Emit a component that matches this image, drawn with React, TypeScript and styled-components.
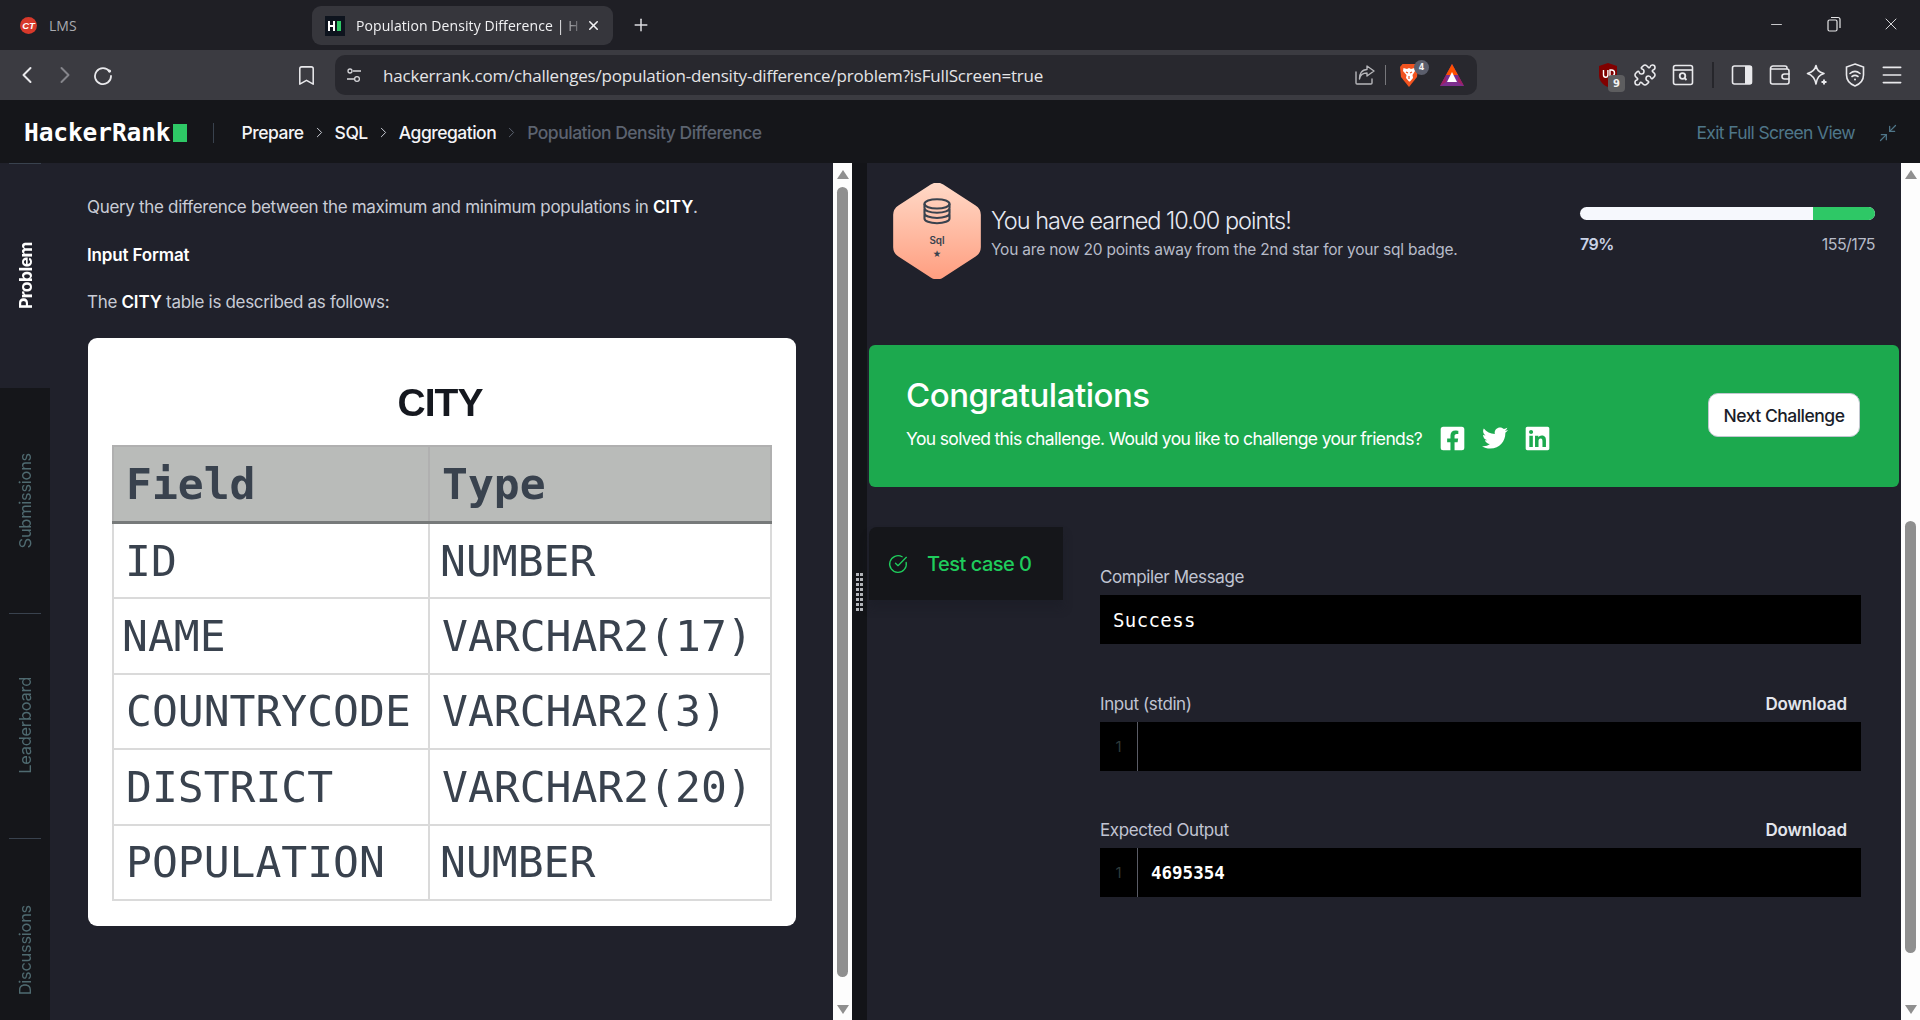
import React from "react"
import styled, { createGlobalStyle } from "styled-components"
import { Bookmark, ChevronLeft, ChevronRight, CircleCheckBig, Menu, Minimize2, Minus, Plus, Puzzle, X } from "lucide-react"
import { FaFacebookSquare, FaLinkedin, FaTwitter } from "react-icons/fa"

const GlobalStyle = createGlobalStyle`
  html, body {
    margin: 0;
    padding: 0;
    background: #20212b;
    overflow: hidden;
  }
  * {
    box-sizing: border-box;
  }
`

const Page = styled.div`
  width: 1920px;
  height: 1020px;
  display: flex;
  flex-direction: column;
  overflow: hidden;
  font-family: Inter, "Liberation Sans", sans-serif;
`

/* browser chrome */

const TabStrip = styled.div`
  height: 50px;
  flex: none;
  display: flex;
  align-items: center;
  background: #1f1f25;
  font-family: "Open Sans", "Liberation Sans", sans-serif;
  font-size: 14px;
`

const InactiveTab = styled.div`
  width: 312px;
  display: flex;
  align-items: center;
  padding-left: 20px;
  gap: 12px;
  color: #a9aab0;
`

const ActiveTab = styled.div`
  width: 301px;
  height: 39px;
  margin-top: 1px;
  display: flex;
  align-items: center;
  padding: 0 12px 0 13px;
  border-radius: 9px;
  background: #36363c;
  color: #f1f1f3;
`

const TabTitle = styled.span`
  flex: 1;
  margin-left: 11px;
  letter-spacing: 0.08px;
  white-space: nowrap;
  -webkit-mask-image: linear-gradient(to right, #000 88%, transparent 100%);
  mask-image: linear-gradient(to right, #000 88%, transparent 100%);
`

const NewTab = styled.div`
  margin-left: 18px;
  display: flex;
  color: #dcdce0;
`

const WindowControls = styled.div`
  margin-left: auto;
  margin-top: -2px;
  display: flex;
  align-items: center;
  padding-right: 1px;
  color: #e6e6e8;
`

const WindowButton = styled.div`
  width: 57px;
  display: flex;
  justify-content: center;
`

const Toolbar = styled.div`
  height: 50px;
  flex: none;
  display: flex;
  align-items: center;
  padding: 0 9px 0 8px;
  background: #3b3b41;
  color: #e9e9ec;
`

const Slot = styled.div<{ $w?: number; $ml?: number; $dim?: boolean }>`
  position: relative;
  width: ${(p) => p.$w ?? 38}px;
  margin-left: ${(p) => p.$ml ?? 0}px;
  flex: none;
  display: flex;
  justify-content: center;
  align-items: center;
  color: ${(p) => (p.$dim ? "#85858b" : "inherit")};
`

const AddressBar = styled.div`
  width: 1142px;
  height: 40px;
  margin-left: 10px;
  flex: none;
  display: flex;
  align-items: center;
  padding: 0 6px 0 10px;
  border-radius: 10px;
  background: #28282e;
`

const Url = styled.div`
  margin-left: 20px;
  flex: 1;
  font-family: "Open Sans", "Liberation Sans", sans-serif;
  font-size: 17px;
  letter-spacing: -0.2px;
  color: #e4e4e6;
  white-space: nowrap;
`

const ThinRule = styled.div<{ $h: number; $color: string; $w?: number }>`
  width: ${(p) => p.$w ?? 1}px;
  height: ${(p) => p.$h}px;
  background: ${(p) => p.$color};
`

const CountBadge = styled.span<{ $round?: boolean }>`
  position: absolute;
  display: flex;
  align-items: center;
  justify-content: center;
  font-family: "DejaVu Sans", sans-serif;
  font-weight: 700;
  color: #f2f2f2;
  ${(p) =>
    p.$round
      ? `width: 15px; height: 15px; top: -3px; left: 20px; border-radius: 50%; background: #5b5e6c; font-size: 8px;`
      : `width: 17px; height: 17px; top: 12px; left: 19px; border-radius: 4px; background: #5d5d5f; font-size: 10px;`}
`

/* site header */

const SiteHeader = styled.header`
  height: 63px;
  flex: none;
  display: flex;
  align-items: center;
  padding: 2px 0 0 24px;
  background: #15161a;
  font-size: 17.5px;
  letter-spacing: -0.5px;
`

const Logo = styled.div`
  display: flex;
  align-items: center;
  font-family: "DejaVu Sans Mono", monospace;
  font-weight: 700;
  font-size: 24.5px;
  letter-spacing: -0.1px;
  color: #fff;
`

const LogoBlock = styled.span`
  width: 14px;
  height: 18px;
  margin-left: 2px;
  background: #2ec866;
`

const HeaderRule = styled.div`
  width: 1px;
  height: 20px;
  margin: 0 28px 0 26px;
  background: #39424e;
`

const Crumb = styled.span<{ $current?: boolean }>`
  font-weight: 500;
  color: ${(p) => (p.$current ? "#5c6370" : "#f4f4f6")};
`

const CrumbSep = styled.span<{ $dim?: boolean }>`
  display: flex;
  width: 31px;
  justify-content: center;
  color: ${(p) => (p.$dim ? "#5c6370" : "#c9ccd4")};
`

const ExitFull = styled.div`
  margin-left: auto;
  display: flex;
  align-items: center;
  gap: 23px;
  padding-right: 22px;
  font-weight: 400;
  color: #4f7689;
  letter-spacing: -0.65px;
`

/* main area */

const Main = styled.main`
  flex: 1;
  min-height: 0;
  display: flex;
  background: #20212b;
`

const SideTabs = styled.nav`
  position: relative;
  width: 50px;
  flex: none;
  height: 100%;
  overflow: hidden;
  background: #15161a;
  &::before {
    content: "";
    position: absolute;
    z-index: 1;
    top: 0;
    left: 9px;
    right: 9px;
    height: 1px;
    background: #39424e;
  }
`

const SideTab = styled.div<{ $active?: boolean; $rule?: boolean }>`
  position: relative;
  height: 225px;
  display: flex;
  align-items: center;
  justify-content: center;
  background: ${(p) => (p.$active ? "#20212b" : "transparent")};
  color: ${(p) => (p.$active ? "#ffffff" : "#4f6a70")};
  font-weight: ${(p) => (p.$active ? 700 : 400)};
  font-size: ${(p) => (p.$active ? 17.5 : 16.5)}px;
  letter-spacing: ${(p) => (p.$active ? -0.55 : -0.3)}px;
  span {
    writing-mode: vertical-rl;
    transform: rotate(180deg);
  }
  &::after {
    content: "";
    display: ${(p) => (p.$rule ? "block" : "none")};
    position: absolute;
    z-index: 1;
    left: 9px;
    right: 9px;
    bottom: -1px;
    height: 1px;
    background: #39424e;
  }
`

const ProblemPane = styled.section`
  width: 783px;
  flex: none;
  padding: 32px 37px 0 37px;
`

const Para = styled.p`
  margin: 0 0 23.5px;
  font-size: 17px;
  line-height: 24px;
  letter-spacing: -0.32px;
  color: #c9ccd6;
  b {
    font-weight: 600;
    letter-spacing: -0.15px;
    color: #fff;
  }
`

const TableCard = styled.div`
  width: 708px;
  height: 588px;
  margin-left: 1px;
  padding-top: 42px;
  border-radius: 9px;
  background: #fff;
  filter: blur(0.35px);
`

const TableTitle = styled.div`
  height: 46px;
  margin-bottom: 19px;
  padding-right: 4px;
  text-align: center;
  font-family: "Liberation Sans", sans-serif;
  font-weight: 700;
  font-size: 39px;
  line-height: 46px;
  letter-spacing: -1px;
  color: #15181f;
`

const FieldTable = styled.table`
  width: 658px;
  margin-left: 24px;
  border-collapse: collapse;
  table-layout: fixed;
  font-family: "DejaVu Sans Mono", monospace;
  font-size: 43px;
  color: #39424e;
  td, th {
    height: 75.500px;
    padding: 0 0 0 12px;
    border: 2px solid #dadada;
    font-weight: 400;
    text-align: left;
    white-space: nowrap;
  }
  th {
    height: 77px;
    font-weight: 700;
    background: #b9bbb9;
    border-color: #b0b0b0;
    border-bottom: 3px solid #777a7a;
  }
`

const Shift = styled.span<{ $x: number }>`
  margin-left: ${(p) => p.$x}px;
`

const Track = styled.div`
  width: 19px;
  flex: none;
  height: 100%;
  display: flex;
  flex-direction: column;
  align-items: center;
  padding: 7px 0 6px;
  background: #fdfdfd;
`

const Arrow = styled.div<{ $down?: boolean }>`
  width: 0;
  height: 0;
  margin-top: ${(p) => (p.$down ? "auto" : "0")};
  border-left: 6px solid transparent;
  border-right: 6px solid transparent;
  ${(p) => (p.$down ? "border-top: 9px solid #8f8f8f;" : "border-bottom: 9px solid #8f8f8f;")}
`

const Thumb = styled.div<{ $gap: number; $h: number }>`
  width: 11px;
  height: ${(p) => p.$h}px;
  margin-top: ${(p) => p.$gap}px;
  border-radius: 6px;
  background: #8f8f8f;
`

const Splitter = styled.div`
  width: 15px;
  flex: none;
  display: flex;
  align-items: center;
  justify-content: center;
  background: #131418;
  color: #b4b6bb;
`

/* result pane */

const ResultPane = styled.section`
  flex: 1;
  min-width: 0;
  padding: 0 2px;
`

const Earned = styled.div`
  height: 142px;
  display: flex;
  padding: 20px 24px 0 24px;
`

const EarnedText = styled.div`
  margin-left: 10px;
  width: 589px;
  padding-top: 23px;
`

const EarnedTitle = styled.div`
  font-size: 23.5px;
  line-height: 30px;
  font-weight: 300;
  letter-spacing: -1px;
  color: #e7e9f2;
`

const EarnedSub = styled.div`
  margin-top: 4px;
  font-size: 15.5px;
  line-height: 20px;
  font-weight: 400;
  letter-spacing: -0.21px;
  color: #b7bbc8;
`

const Progress = styled.div`
  width: 295px;
  padding-top: 24px;
`

const ProgressBar = styled.div`
  height: 13px;
  display: flex;
  overflow: hidden;
  border-radius: 7px;
  background: #f6f8fd;
`

const ProgressFill = styled.div`
  margin-left: auto;
  background: #2ec866;
`

const ProgressLabels = styled.div`
  margin-top: 14px;
  display: flex;
  justify-content: space-between;
  font-size: 16px;
  line-height: 20px;
  letter-spacing: -0.5px;
  color: #b7bbc8;
  b {
    font-weight: 600;
    color: #c9d2e6;
  }
`

const Banner = styled.div`
  height: 142px;
  margin-top: 40px;
  display: flex;
  align-items: center;
  justify-content: space-between;
  padding: 0 39px 0 37px;
  border-radius: 6px;
  background: #1ca94e;
  color: #fff;
`

const BannerCopy = styled.div`
  padding-bottom: 6px;
`

const BannerTitle = styled.div`
  font-size: 33px;
  line-height: 40px;
  font-weight: 500;
  letter-spacing: -0.5px;
`

const BannerRow = styled.div`
  margin-top: 10px;
  display: flex;
  align-items: center;
  font-size: 17.5px;
  letter-spacing: -0.65px;
  svg {
    margin-left: 16px;
    flex: none;
  }
  svg:first-of-type {
    margin-left: 0;
  }
`

const BannerAsk = styled.span`
  width: 533px;
`

const NextButton = styled.button`
  width: 152px;
  height: 44px;
  margin-top: -2px;
  border: 1px solid #c2c7d0;
  border-radius: 10px;
  background: #fff;
  font-family: inherit;
  font-size: 17.5px;
  font-weight: 500;
  letter-spacing: -0.5px;
  color: #1a1d29;
`

const TestArea = styled.div`
  margin-top: 40px;
  display: flex;
`

const TestTab = styled.div`
  width: 194px;
  height: 73px;
  flex: none;
  display: flex;
  align-items: center;
  gap: 19px;
  padding-left: 19px;
  border-radius: 8px 0 0 0;
  background: #15161a;
  box-shadow: 0 8px 10px rgba(24, 25, 33, 0.35);
  font-size: 20px;
  font-weight: 500;
  letter-spacing: -0.5px;
  color: #1fcc5c;
`

const Fields = styled.div`
  width: 761px;
  margin-left: 37px;
  padding-top: 40px;
`

const Field = styled.div`
  height: 126.5px;
`

const FieldHead = styled.div`
  height: 20px;
  margin-bottom: 8px;
  display: flex;
  justify-content: space-between;
  align-items: center;
  padding-right: 14px;
  font-size: 17px;
  letter-spacing: -0.4px;
  color: #c0c4d2;
`

const DownloadLink = styled.span`
  font-weight: 600;
  letter-spacing: -0.1px;
  color: #e3e5ec;
`

const CodeBox = styled.div`
  height: 49px;
  display: flex;
  align-items: center;
  background: #000;
  color: #fff;
`

const MessageText = styled.span`
  margin-left: 13px;
  font-family: "DejaVu Sans Mono", monospace;
  font-size: 19px;
  letter-spacing: 0.4px;
`

const Gutter = styled.div`
  width: 38px;
  height: 100%;
  flex: none;
  display: flex;
  align-items: center;
  justify-content: center;
  border-right: 1px solid #5a5c66;
  font-family: Inter, sans-serif;
  font-size: 15px;
  color: #2f3b3b;
`

const OutputText = styled.span`
  margin-left: 13px;
  font-family: "DejaVu Sans Mono", monospace;
  font-size: 17.5px;
  font-weight: 700;
`

const LmsIcon = () => (
  <svg width="17" height="17" viewBox="0 0 17 17">
    <circle cx="8.5" cy="8.5" r="8.5" fill="#d7392b" />
    <text x="8.5" y="12" textAnchor="middle" fontFamily="Liberation Sans" fontWeight="700" fontStyle="italic" fontSize="9.5" fill="#fff">
      CT
    </text>
  </svg>
)

const HrIcon = () => (
  <svg width="20" height="20" viewBox="0 0 20 20">
    <rect width="20" height="20" fill="#0e141e" />
    <path d="M4 5v10M9 5v10M4 10h5" stroke="#fff" strokeWidth="2" fill="none" />
    <rect x="12" y="5" width="4" height="10" fill="#2ec866" />
  </svg>
)

const RestoreIcon = () => (
  <svg width="14" height="16" viewBox="0 0 14 16" fill="none" stroke="currentColor" strokeWidth="1.2">
    <rect x="1" y="4" width="9" height="11" rx="1.5" />
    <path d="M4 1.5h7a2 2 0 0 1 2 2V12" />
  </svg>
)

const ReloadIcon = () => (
  <svg width="22" height="22" viewBox="0 0 22 22" fill="none" stroke="currentColor" strokeWidth="1.8">
    <path d="M17.5 7.5A8 8 0 1 0 19 12" strokeLinecap="round" />
    <circle cx="17.5" cy="7" r="1.6" fill="currentColor" stroke="none" />
  </svg>
)

const SiteSettingsIcon = () => (
  <svg width="18" height="18" viewBox="0 0 18 18" fill="none" stroke="#d6d6da" strokeWidth="1.3">
    <circle cx="5" cy="5" r="2" />
    <path d="M8 5h8M2 13h7" />
    <circle cx="12" cy="13" r="2.4" />
  </svg>
)

const ShareIcon = () => (
  <svg width="22" height="22" viewBox="0 0 22 22" fill="none" stroke="#b6b6ba" strokeWidth="1.4" strokeLinejoin="round">
    <path d="M13 2l7 5-7 5V9C8 9 6 12 5.5 15 5 10 8 5.5 13 5.5V2z" />
    <path d="M2 8v11a1 1 0 0 0 1 1h14a1 1 0 0 0 1-1v-4" strokeLinecap="round" />
  </svg>
)

const BraveIcon = () => (
  <svg width="20" height="24" viewBox="0 0 20 24">
    <path d="M3.500 1h13l2.500 3-1 10-8 10-8-10-1-10z" fill="#f1531f" />
    <path d="M4.500 5l3.500 1 2 -1 2 1 3.500-1 .5 3-2.500 4 .5 3-3 3.500h-1l-3-3.500 .5-3L4 8z" fill="#fff" />
    <path d="M7 9l2 1M13 9l-2 1M10 13v3" stroke="#f1531f" strokeWidth="1.200" fill="none" />
  </svg>
)

const BatIcon = () => (
  <svg width="26" height="24" viewBox="0 0 26 24">
    <path d="M13 1L25 23H1z" fill="#7d2e8e" />
    <path d="M13 1L19 12H7z" fill="#ff5000" />
    <path d="M7 12L1 23l6-4zM19 12l6 11-6-4z" fill="#9e1f63" />
    <path d="M13 9l5 10H8z" fill="#fff" />
  </svg>
)

const UblockIcon = () => (
  <svg width="20" height="24" viewBox="0 0 20 24">
    <path d="M10 0l9 3v9c0 6-4 10-9 12-5-2-9-6-9-12V3z" fill="#800000" />
    <path d="M5.5 7v5a2.2 2.2 0 0 0 4.4 0V7M12 7h1.5a2.5 2.5 0 0 1 0 6H12z" fill="none" stroke="#fff" strokeWidth="1.4" />
  </svg>
)

const SearchPanelIcon = () => (
  <svg width="22" height="22" viewBox="0 0 22 22" fill="none" stroke="currentColor" strokeWidth="1.6">
    <rect x="1.5" y="1.5" width="19" height="19" rx="2" />
    <path d="M1.5 6h19" />
    <circle cx="10.5" cy="12" r="2.8" strokeWidth="1.8" />
    <path d="M12.5 14l2 2" strokeWidth="1.8" />
  </svg>
)

const SidebarIcon = () => (
  <svg width="22" height="22" viewBox="0 0 22 22" fill="none" stroke="currentColor" strokeWidth="1.6">
    <rect x="1.5" y="2" width="19" height="18" rx="2" />
    <rect x="14" y="2" width="6.5" height="18" fill="currentColor" stroke="none" />
  </svg>
)

const WalletIcon = () => (
  <svg width="22" height="22" viewBox="0 0 22 22" fill="none" stroke="currentColor" strokeWidth="1.6">
    <path d="M18 5V4a2 2 0 0 0-2-2H4a2.5 2.5 0 0 0-2.5 2.5V18a2 2 0 0 0 2 2H18a2 2 0 0 0 2-2V7a2 2 0 0 0-2-2H2" />
    <path d="M20.500 10h-5a2.500 2.500 0 0 0 0 5h5" />
  </svg>
)

const LeoIcon = () => (
  <svg width="22" height="22" viewBox="0 0 22 22" fill="none" stroke="currentColor" strokeWidth="1.6" strokeLinejoin="round">
    <path d="M10 1.500c1 4.500 2.500 6.500 8 8-4.500 1.500-7 3.500-8 10.500-1-5-3.500-9-8.500-10.500 5.500-1.500 7.500-3.500 8.500-8z" />
    <path d="M18 15.500v5M15.500 18h5" strokeWidth="1.900" />
  </svg>
)

const VpnIcon = () => (
  <svg width="20" height="24" viewBox="0 0 20 24" fill="none" stroke="currentColor" strokeWidth="1.600">
    <path d="M10 1l8.500 3v8c0 5.500-3.500 9-8.500 11-5-2-8.500-5.500-8.500-11V4z" />
    <path d="M5 10.500c3-2.500 7-2.500 10 0M7 13.500c2-1.500 4-1.500 6 0" strokeLinecap="round" />
    <circle cx="10" cy="16.500" r="1" fill="currentColor" stroke="none" />
  </svg>
)

const SplitterGrip = () => (
  <svg width="7" height="38" viewBox="0 0 7 38" fill="currentColor">
    {[0, 1, 2, 3, 4, 5, 6, 7].map((row) => (
      <React.Fragment key={row}>
        <rect x="0" y={row * 5} width="3" height="3" />
        <rect x="4" y={row * 5} width="3" height="3" />
      </React.Fragment>
    ))}
  </svg>
)

const SkillBadge = () => (
  <svg width="88" height="96" viewBox="2 2 84 92">
    <defs>
      <linearGradient id="badgeFill" x1="0" y1="0" x2="0" y2="1">
        <stop offset="0" stopColor="#ffd9c7" />
        <stop offset="1" stopColor="#ff9e80" />
      </linearGradient>
    </defs>
    <path
      d="M38 3.500a11 11 0 0 1 12 0l31 20a11 11 0 0 1 5 9v31a11 11 0 0 1-5 9l-31 20a11 11 0 0 1-12 0l-31-20a11 11 0 0 1-5-9v-31a11 11 0 0 1 5-9z"
      fill="url(#badgeFill)"
    />
    <g fill="none" stroke="#39424e" strokeWidth="2">
      <ellipse cx="44" cy="22" rx="12" ry="4.500" />
      <path d="M32 22v4c0 2.500 5 4.500 12 4.500s12-2 12-4.500v-4M32 27v4c0 2.500 5 4.500 12 4.500s12-2 12-4.500v-4M32 32v4c0 2.500 5 4.500 12 4.500s12-2 12-4.500v-4" />
    </g>
    <text x="44" y="60" textAnchor="middle" fontFamily="Inter" fontSize="9.500" fontWeight="600" fill="#39424e">
      Sql
    </text>
    <text x="44" y="73" textAnchor="middle" fontFamily="DejaVu Sans" fontSize="9" fill="#39424e">
      ★
    </text>
  </svg>
)

const sideTabs = ["Problem", "Submissions", "Leaderboard", "Discussions"]

const rows: [string, string, number, number][] = [
  ["ID", "NUMBER", -1, -2],
  ["NAME", "VARCHAR2(17)", -4, 0],
  ["COUNTRYCODE", "VARCHAR2(3)", 0, 0],
  ["DISTRICT", "VARCHAR2(20)", 0, 0],
  ["POPULATION", "NUMBER", 0, -2],
]

export default function App() {
  return (
    <Page>
      <GlobalStyle />
      <TabStrip>
        <InactiveTab>
          <LmsIcon />
          LMS
        </InactiveTab>
        <ActiveTab>
          <HrIcon />
          <TabTitle>Population Density Difference | H</TabTitle>
          <X size={15} strokeWidth={2.5} />
        </ActiveTab>
        <NewTab>
          <Plus size={20} strokeWidth={1.8} />
        </NewTab>
        <WindowControls>
          <WindowButton>
            <Minus size={17} strokeWidth={1.2} />
          </WindowButton>
          <WindowButton>
            <RestoreIcon />
          </WindowButton>
          <WindowButton>
            <X size={20} strokeWidth={1.1} />
          </WindowButton>
        </WindowControls>
      </TabStrip>

      <Toolbar>
        <Slot>
          <ChevronLeft size={28} strokeWidth={1.7} />
        </Slot>
        <Slot $dim>
          <ChevronRight size={28} strokeWidth={1.7} />
        </Slot>
        <Slot>
          <ReloadIcon />
        </Slot>
        <Slot $ml={165}>
          <Bookmark size={23} strokeWidth={1.6} />
        </Slot>
        <AddressBar>
          <SiteSettingsIcon />
          <Url>hackerrank.com/challenges/population-density-difference/problem?isFullScreen=true</Url>
          <Slot $w={22}>
            <ShareIcon />
          </Slot>
          <Slot $w={18}>
            <ThinRule $h={20} $color="#77777b" />
          </Slot>
          <Slot $w={30}>
            <BraveIcon />
            <CountBadge $round>4</CountBadge>
          </Slot>
          <Slot $w={38} $ml={9}>
            <BatIcon />
          </Slot>
        </AddressBar>
        <Slot $w={37.5} $ml={112}>
          <UblockIcon />
          <CountBadge>9</CountBadge>
        </Slot>
        <Slot $w={37.5}>
          <Puzzle size={24} strokeWidth={1.6} />
        </Slot>
        <Slot $w={37.5}>
          <SearchPanelIcon />
        </Slot>
        <Slot $w={22}>
          <ThinRule $h={26} $w={2} $color="#26262b" />
        </Slot>
        <Slot $w={37.5}>
          <SidebarIcon />
        </Slot>
        <Slot $w={37.5}>
          <WalletIcon />
        </Slot>
        <Slot $w={37.5}>
          <LeoIcon />
        </Slot>
        <Slot $w={37.5}>
          <VpnIcon />
        </Slot>
        <Slot $w={37.5}>
          <Menu size={26} strokeWidth={1.5} />
        </Slot>
      </Toolbar>

      <SiteHeader>
        <Logo>
          HackerRank
          <LogoBlock />
        </Logo>
        <HeaderRule />
        <Crumb>Prepare</Crumb>
        <CrumbSep>
          <ChevronRight size={17} strokeWidth={1.4} />
        </CrumbSep>
        <Crumb>SQL</Crumb>
        <CrumbSep>
          <ChevronRight size={17} strokeWidth={1.4} />
        </CrumbSep>
        <Crumb>Aggregation</Crumb>
        <CrumbSep $dim>
          <ChevronRight size={17} strokeWidth={1.4} />
        </CrumbSep>
        <Crumb $current>Population Density Difference</Crumb>
        <ExitFull>
          Exit Full Screen View
          <Minimize2 size={20} strokeWidth={1.5} />
        </ExitFull>
      </SiteHeader>

      <Main>
        <SideTabs>
          {sideTabs.map((name, i) => (
            <SideTab key={name} $active={i === 0} $rule={i === 1 || i === 2}>
              <span>{name}</span>
            </SideTab>
          ))}
        </SideTabs>

        <ProblemPane>
          <Para>
            Query the difference between the maximum and minimum populations in <b>CITY</b>.
          </Para>
          <Para>
            <b>Input Format</b>
          </Para>
          <Para>
            The <b>CITY</b> table is described as follows:
          </Para>
          <TableCard>
            <TableTitle>CITY</TableTitle>
            <FieldTable>
              <colgroup>
                <col style={{ width: 316 }} />
                <col style={{ width: 342 }} />
              </colgroup>
              <thead>
                <tr>
                  <th>Field</th>
                  <th>Type</th>
                </tr>
              </thead>
              <tbody>
                {rows.map(([field, type, shift, typeShift]) => (
                  <tr key={field}>
                    <td>
                      <Shift $x={shift}>{field}</Shift>
                    </td>
                    <td>
                      <Shift $x={typeShift}>{type}</Shift>
                    </td>
                  </tr>
                ))}
              </tbody>
            </FieldTable>
          </TableCard>
        </ProblemPane>

        <Track>
          <Arrow />
          <Thumb $gap={8} $h={790} />
          <Arrow $down />
        </Track>

        <Splitter>
          <SplitterGrip />
        </Splitter>

        <ResultPane>
          <Earned>
            <SkillBadge />
            <EarnedText>
              <EarnedTitle>You have earned 10.00 points!</EarnedTitle>
              <EarnedSub>You are now 20 points away from the 2nd star for your sql badge.</EarnedSub>
            </EarnedText>
            <Progress>
              <ProgressBar>
                <ProgressFill style={{ width: `${100 - 79}%` }} />
              </ProgressBar>
              <ProgressLabels>
                <b>79%</b>
                <span>155/175</span>
              </ProgressLabels>
            </Progress>
          </Earned>

          <Banner>
            <BannerCopy>
              <BannerTitle>Congratulations</BannerTitle>
              <BannerRow>
                <BannerAsk>You solved this challenge. Would you like to challenge your friends?</BannerAsk>
                <FaFacebookSquare size={27} />
                <FaTwitter size={26} />
                <FaLinkedin size={27} />
              </BannerRow>
            </BannerCopy>
            <NextButton>Next Challenge</NextButton>
          </Banner>

          <TestArea>
            <TestTab>
              <CircleCheckBig size={20} strokeWidth={1.6} />
              Test case 0
            </TestTab>
            <Fields>
              <Field>
                <FieldHead>Compiler Message</FieldHead>
                <CodeBox>
                  <MessageText>Success</MessageText>
                </CodeBox>
              </Field>
              <Field>
                <FieldHead>
                  Input (stdin)
                  <DownloadLink>Download</DownloadLink>
                </FieldHead>
                <CodeBox>
                  <Gutter>1</Gutter>
                </CodeBox>
              </Field>
              <Field>
                <FieldHead>
                  Expected Output
                  <DownloadLink>Download</DownloadLink>
                </FieldHead>
                <CodeBox>
                  <Gutter>1</Gutter>
                  <OutputText>4695354</OutputText>
                </CodeBox>
              </Field>
            </Fields>
          </TestArea>
        </ResultPane>

        <Track>
          <Arrow />
          <Thumb $gap={342} $h={432} />
          <Arrow $down />
        </Track>
      </Main>
    </Page>
  )
}
